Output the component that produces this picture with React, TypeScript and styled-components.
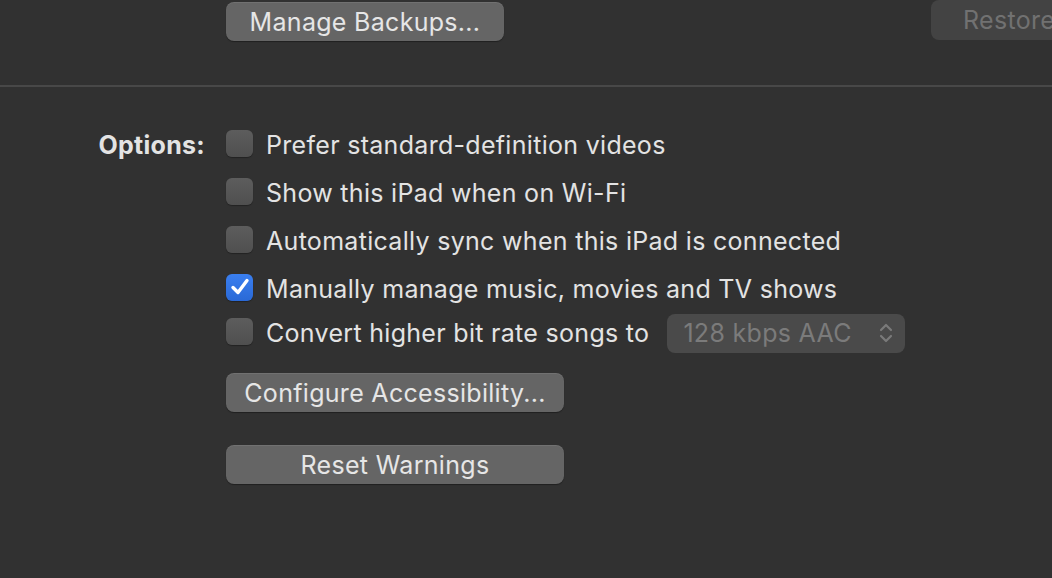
import styled, { createGlobalStyle } from "styled-components";

const GlobalStyle = createGlobalStyle`
  html, body {
    margin: 0;
    padding: 0;
    background: #313131;
    overflow: hidden;
  }
  body {
    font-family: Inter, "Liberation Sans", sans-serif;
  }
`;

const options = [
  { label: "Prefer standard-definition videos", checked: false },
  { label: "Show this iPad when on Wi-Fi", checked: false },
  { label: "Automatically sync when this iPad is connected", checked: false },
  { label: "Manually manage music, movies and TV shows", checked: true },
];

const App = () => {
  return (
    <Page>
      <GlobalStyle />
      <TopRow>
        <Button $width={278}>Manage Backups...</Button>
        <RestoreButton disabled>Restore Backup...</RestoreButton>
      </TopRow>
      <Separator />
      <OptionsGrid>
        <Label>Options:</Label>
        <OptionList>
          {options.map((o) => (
            <Row key={o.label}>
              <Checkbox $checked={o.checked}>
                {o.checked && (
                  <svg width="24" height="24" viewBox="0 0 24 24">
                    <path
                      d="M5 12.5 L10 17.5 L19 5.5"
                      fill="none"
                      stroke="#fff"
                      strokeWidth="3.4"
                      strokeLinecap="round"
                      strokeLinejoin="round"
                    />
                  </svg>
                )}
              </Checkbox>
              <RowText>{o.label}</RowText>
            </Row>
          ))}
          <Row $tall>
            <Checkbox $checked={false} />
            <RowText>Convert higher bit rate songs to</RowText>
            <Popup>
              <span>128 kbps AAC</span>
              <svg width="16" height="26" viewBox="0 0 16 26">
                <path
                  d="M3 10 L8 5 L13 10 M3 16 L8 21 L13 16"
                  fill="none"
                  stroke="#7a7a7a"
                  strokeWidth="2.2"
                  strokeLinecap="round"
                  strokeLinejoin="round"
                />
              </svg>
            </Popup>
          </Row>
          <Buttons>
            <Button $width={338}>Configure Accessibility...</Button>
            <Button $width={338}>Reset Warnings</Button>
          </Buttons>
        </OptionList>
      </OptionsGrid>
    </Page>
  );
};
export default App;

const Page = styled.div`
  width: 1052px;
  height: 578px;
  background: #313131;
  color: #e3e3e3;
  overflow: hidden;
  font-size: 25px;
  letter-spacing: 0.3px;
`;

const TopRow = styled.div`
  display: flex;
  align-items: flex-start;
  padding: 2px 0 0 226px;
  height: 43px;
  box-sizing: border-box;
  white-space: nowrap;
`;

const Button = styled.button<{ $width: number }>`
  width: ${(p) => p.$width}px;
  height: 39px;
  flex-shrink: 0;
  border: 0;
  border-radius: 8px;
  background: #656565;
  box-shadow: 0 1px 1px rgba(0, 0, 0, 0.35), inset 0 1px 0 rgba(255, 255, 255, 0.08);
  color: #e6e6e6;
  font-family: Inter, "Liberation Sans", sans-serif;
  font-size: 25px;
  letter-spacing: 0.3px;
  padding: 1px 0 0;
  white-space: nowrap;
`;

const RestoreButton = styled.button`
  margin-left: 427px;
  margin-top: -2px;
  width: 230px;
  height: 40px;
  flex-shrink: 0;
  border: 0;
  border-radius: 8px;
  background: #434343;
  color: #717171;
  font-family: Inter, "Liberation Sans", sans-serif;
  font-size: 25px;
  letter-spacing: 0.3px;
  text-align: left;
  padding: 0 0 0 32px;
  white-space: nowrap;
`;

const Separator = styled.div`
  margin-top: 42px;
  height: 2px;
  background: #484848;
`;

const OptionsGrid = styled.div`
  display: grid;
  grid-template-columns: 205px 1fr;
  column-gap: 21px;
  padding-top: 32px;
`;

const Label = styled.div`
  text-align: right;
  font-weight: 700;
  color: #e3e3e3;
  line-height: 48px;
  padding-top: 2px;
`;

const OptionList = styled.div`
  display: flex;
  flex-direction: column;
`;

const Row = styled.div<{ $tall?: boolean }>`
  display: flex;
  align-items: center;
  height: ${(p) => (p.$tall ? 40 : 48)}px;
`;

const Checkbox = styled.div<{ $checked: boolean }>`
  width: 27px;
  height: 27px;
  box-sizing: border-box;
  border-radius: 6px;
  flex-shrink: 0;
  display: flex;
  align-items: center;
  justify-content: center;
  background: ${(p) =>
    p.$checked
      ? "linear-gradient(#3a7ff0, #2a69d6)"
      : "linear-gradient(#5d5d5d, #4f4f4f)"};
  box-shadow: 0 1px 1px rgba(0, 0, 0, 0.3);
`;

const RowText = styled.span`
  margin-left: 13px;
  padding-top: 3px;
  color: #e3e3e3;
  white-space: nowrap;
`;

const Popup = styled.div`
  margin-left: 18px;
  width: 238px;
  height: 39px;
  flex-shrink: 0;
  box-sizing: border-box;
  border-radius: 8px;
  background: #4a4a4a;
  display: flex;
  align-items: center;
  justify-content: space-between;
  padding: 0 11px 0 16px;
  color: #7b7b7b;
  margin-top: 4px;
`;

const Buttons = styled.div`
  display: flex;
  flex-direction: column;
  gap: 33px;
  margin-top: 22px;
`;
